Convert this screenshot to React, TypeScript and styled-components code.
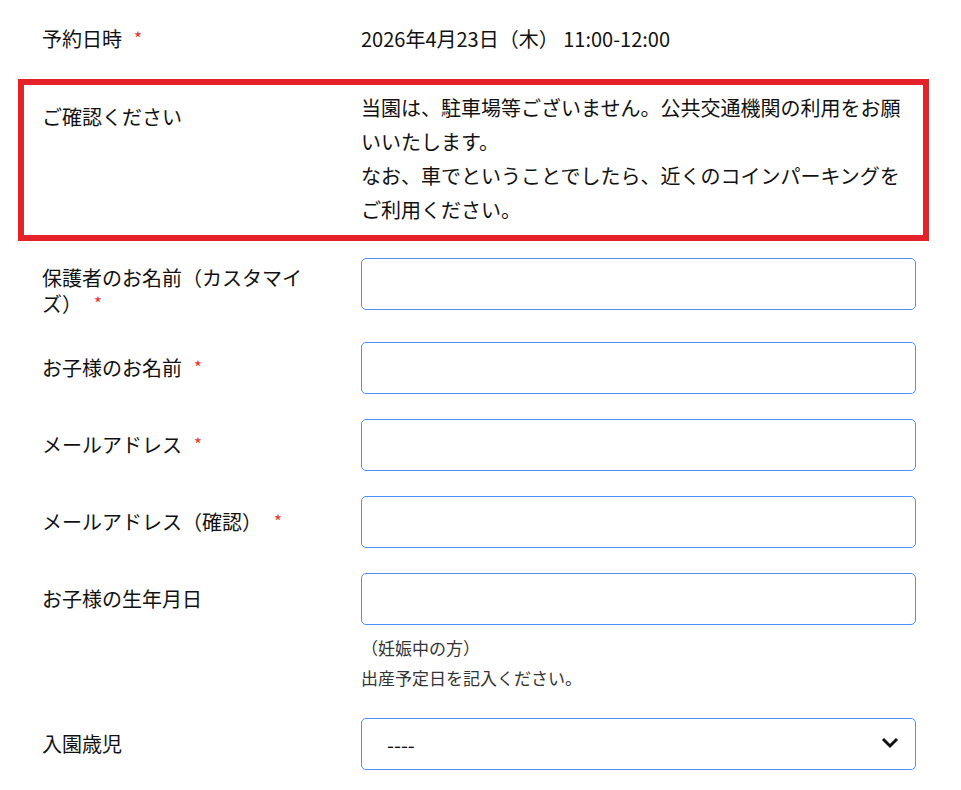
import styled, { createGlobalStyle } from "styled-components";

const GlobalStyle = createGlobalStyle`
  body {
    margin: 0;
    background: #ffffff;
    color: #111111;
    font-family: "Noto Sans CJK JP", "Noto Sans", sans-serif;
  }
`;

const Form = styled.div`
  width: 911px;
  margin-left: 18px;
  padding-top: 26px;
`;

const Row = styled.div<{ $mb?: number; $highlight?: boolean }>`
  display: grid;
  grid-template-columns: 270px 1fr;
  column-gap: 49px;
  padding: ${({ $highlight }) => ($highlight ? "12px 13px 14px 24px" : "0 13px 0 24px")};
  margin-bottom: ${({ $mb }) => $mb ?? 25}px;
  outline: ${({ $highlight }) => ($highlight ? "6px solid #e5212a" : "none")};
  outline-offset: -6px;
`;

const Label = styled.div<{ $pt?: number }>`
  font-size: 20px;
  line-height: 26px;
  padding-top: ${({ $pt }) => $pt ?? 13}px;
`;

const Required = styled.span`
  margin-left: 12px;
  color: #e8322b;
  font-size: 17px;
  line-height: 0;
  vertical-align: 2px;
`;

const ValueText = styled.div<{ $lh?: number }>`
  font-size: 20px;
  line-height: ${({ $lh }) => $lh ?? 34}px;
`;

const Field = styled.div`
  display: flex;
  flex-direction: column;
`;

const Input = styled.input`
  display: block;
  box-sizing: border-box;
  width: 100%;
  height: 52px;
  margin: 0;
  padding: 0 16px;
  border: 1px solid #4f8ff7;
  border-radius: 5px;
  background: #ffffff;
  font-family: inherit;
  font-size: 20px;
  outline: none;
`;

const Help = styled.div`
  margin-top: 8px;
  font-size: 17px;
  line-height: 30px;
  color: #333333;
`;

const SelectWrap = styled.div`
  position: relative;
`;

const Select = styled.select`
  display: block;
  box-sizing: border-box;
  width: 100%;
  height: 52px;
  margin: 0;
  padding: 0 50px 0 25px;
  border: 1px solid #4f8ff7;
  border-radius: 5px;
  background: #ffffff;
  color: #111111;
  font-family: inherit;
  font-size: 20px;
  appearance: none;
  -webkit-appearance: none;
  outline: none;
`;

const Chevron = styled.svg`
  position: absolute;
  right: 16px;
  top: 18px;
  pointer-events: none;
`;

function App() {
  return (
    <>
      <GlobalStyle />
      <Form>
        <Row $mb={27}>
          <Label $pt={0}>
            予約日時<Required>*</Required>
          </Label>
          <ValueText $lh={26}>2026年4月23日（木） 11:00-12:00</ValueText>
        </Row>

        <Row $highlight $mb={17}>
          <Label>ご確認ください</Label>
          <ValueText>
            当園は、駐車場等ございません。公共交通機関の利用をお願いいたします。
            <br />
            なお、車でということでしたら、近くのコインパーキングをご利用ください。
          </ValueText>
        </Row>

        <Row>
          <Label $pt={7}>
            保護者のお名前（カスタマイズ）<Required>*</Required>
          </Label>
          <Input type="text" />
        </Row>

        <Row>
          <Label>
            お子様のお名前<Required>*</Required>
          </Label>
          <Input type="text" />
        </Row>

        <Row>
          <Label>
            メールアドレス<Required>*</Required>
          </Label>
          <Input type="email" />
        </Row>

        <Row>
          <Label>
            メールアドレス（確認）<Required>*</Required>
          </Label>
          <Input type="email" />
        </Row>

        <Row>
          <Label>お子様の生年月日</Label>
          <Field>
            <Input type="text" />
            <Help>
              （妊娠中の方）
              <br />
              出産予定日を記入ください。
            </Help>
          </Field>
        </Row>

        <Row>
          <Label>入園歳児</Label>
          <SelectWrap>
            <Select defaultValue="">
              <option value="">----</option>
              <option value="0">0歳児</option>
              <option value="1">1歳児</option>
              <option value="2">2歳児</option>
            </Select>
            <Chevron width="20" height="14" viewBox="0 0 20 14" aria-hidden="true">
              <polyline
                points="3,3 10,10 17,3"
                fill="none"
                stroke="#111111"
                strokeWidth="3"
              />
            </Chevron>
          </SelectWrap>
        </Row>
      </Form>
    </>
  );
}

export default App;
